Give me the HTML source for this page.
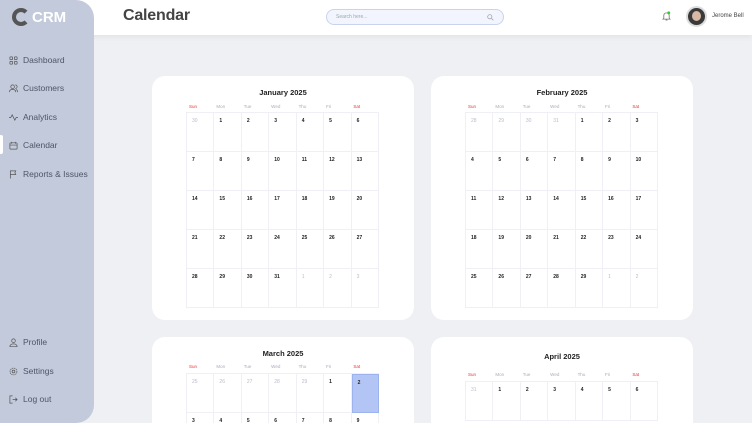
<!DOCTYPE html>
<html><head><meta charset="utf-8"><style>
*{margin:0;padding:0;box-sizing:border-box}
html{width:752px;height:423px;overflow:hidden}
body{width:752px;height:423px;overflow:hidden;background:#eef0f4;font-family:"Liberation Sans",sans-serif;position:relative}
.side{position:absolute;left:0;top:0;width:94px;height:423px;background:#c3cadb;border-radius:0 18px 18px 0;z-index:3}
.logo{position:absolute;left:12px;top:8px;font-weight:bold;font-size:15px;color:#fff;display:flex;align-items:center}
.logo .c{width:18px;height:18px;border:4px solid #555;border-right-color:transparent;border-radius:50%;margin-right:2px}
.nav{position:absolute;left:9px;font-size:8.5px;color:#4d5566;display:flex;align-items:center}
.nav svg{width:9px;height:9px;margin-right:5px}
.act{position:absolute;left:0;top:135px;width:3px;height:19px;background:#fff;border-radius:0 2px 2px 0}
.head{position:absolute;left:0;top:0;width:752px;height:35px;background:#fff;box-shadow:0 2px 6px rgba(0,0,0,.06);z-index:2}
.title{position:absolute;left:123px;top:7px;font-size:16px;color:#444;font-weight:bold;letter-spacing:-0.2px}
.search{position:absolute;left:326px;top:9px;width:178px;height:16px;border:1px solid #c9d3ee;background:#f2f5fd;border-radius:8px;font-size:5px;color:#9aa;padding:4px 9px}
.card{position:absolute;background:#fff;border-radius:13px;width:262px;overflow:hidden}
.mt{position:absolute;width:100%;text-align:center;font-size:7.5px;font-weight:bold;color:#222}
.dh{position:absolute;left:34px;width:192px;display:flex;font-size:4.5px;color:#aab}
.dh span{width:27.4px;padding-left:3px}
.dh .r{color:#e33}
.g{position:absolute;left:34px;width:193px;display:grid;grid-template-columns:repeat(7,1fr);border-top:1px solid #eef0f6;border-left:1px solid #eef0f6}
.g div{height:39px;border-right:1px solid #eef0f6;border-bottom:1px solid #eef0f6;font-size:5px;font-weight:bold;color:#222;padding:5px 0 0 5px}
.g .x{color:#bbc;font-weight:normal}
.g .hl{background:#b3c5f5;border:1px solid #9db3ee}
</style></head><body>
<div class="head">
<div class="title">Calendar</div>
<div class="search">Search here...<svg style="position:absolute;right:9px;top:4px" width="7" height="7" viewBox="0 0 10 10"><circle cx="4" cy="4" r="3" fill="none" stroke="#999" stroke-width="1"/><path d="M6.5 6.5L9 9" stroke="#999"/></svg></div>
<svg style="position:absolute;left:662px;top:11px" width="9" height="10" viewBox="0 0 10 11"><path d="M2 8V5a3 3 0 0 1 6 0v3l1 1H1z" fill="none" stroke="#777" stroke-width=".9"/><path d="M4 10h2" stroke="#777"/><circle cx="7.5" cy="2" r="1.6" fill="#3c3"/></svg>
<div style="position:absolute;left:686px;top:6px;width:21px;height:21px;border-radius:50%;background:#3a3a3a;border:2px solid #ddd;overflow:hidden"><div style="width:9px;height:10px;background:#d9b8a5;border-radius:50%;margin:3px auto 0"></div></div>
<div style="position:absolute;left:712px;top:13px;font-size:6px;color:#444">Jerome Bell</div>
</div>
<div class="side">
<div class="logo"><div class="c"></div>CRM</div>
<div class="act"></div>
<div class="nav" style="top:55px"><svg viewBox="0 0 10 10" fill="none" stroke="#555" stroke-width=".8"><rect x="1" y="1" width="3" height="3" rx=".7"/><rect x="6" y="1" width="3" height="3" rx=".7"/><rect x="1" y="6" width="3" height="3" rx=".7"/><rect x="6" y="6" width="3" height="3" rx=".7"/></svg>Dashboard</div>
<div class="nav" style="top:83px"><svg viewBox="0 0 10 10" fill="none" stroke="#555" stroke-width=".8"><circle cx="4" cy="3" r="2"/><path d="M0.5 9c0-2 1.5-3 3.5-3s3.5 1 3.5 3M7 1a2 2 0 0 1 0 4M8 6c1 .5 1.5 1.5 1.5 3"/></svg>Customers</div>
<div class="nav" style="top:112px"><svg viewBox="0 0 10 10" fill="none" stroke="#555" stroke-width=".8"><path d="M0 5h2l1.5-3 3 6 1.5-3h2"/></svg>Analytics</div>
<div class="nav" style="top:140px"><svg viewBox="0 0 10 10" fill="none" stroke="#555" stroke-width=".8"><rect x="1" y="2" width="8" height="7" rx="1"/><path d="M1 4.5h8M3 1v2M7 1v2"/></svg>Calendar</div>
<div class="nav" style="top:169px"><svg viewBox="0 0 10 10" fill="none" stroke="#555" stroke-width=".8"><path d="M1.5 9.5V1h6l-1 2 1 2h-6"/></svg>Reports &amp; Issues</div>
<div class="nav" style="top:337px"><svg viewBox="0 0 10 10" fill="none" stroke="#555" stroke-width=".8"><circle cx="5" cy="3" r="2"/><path d="M1 9.5c0-2 2-3 4-3s4 1 4 3z"/></svg>Profile</div>
<div class="nav" style="top:366px"><svg viewBox="0 0 10 10" fill="none" stroke="#555" stroke-width=".8"><circle cx="5" cy="5" r="1.5"/><circle cx="5" cy="5" r="3.8" stroke-dasharray="1.5 .8"/></svg>Settings</div>
<div class="nav" style="top:394px"><svg viewBox="0 0 10 10" fill="none" stroke="#555" stroke-width=".8"><path d="M4 1H1v8h3M4 5h5M7 3l2 2-2 2"/></svg>Log out</div>
</div>

<div class="card" style="left:152px;top:76px;height:244px">
<div class="mt" style="top:12px">January 2025</div>
<div class="dh" style="top:28px"><span class="r">Sun</span><span>Mon</span><span>Tue</span><span>Wed</span><span>Thu</span><span>Fri</span><span class="r">Sat</span></div>
<div class="g" style="top:36px"><div class="x">30</div><div>1</div><div>2</div><div>3</div><div>4</div><div>5</div><div>6</div><div>7</div><div>8</div><div>9</div><div>10</div><div>11</div><div>12</div><div>13</div><div>14</div><div>15</div><div>16</div><div>17</div><div>18</div><div>19</div><div>20</div><div>21</div><div>22</div><div>23</div><div>24</div><div>25</div><div>26</div><div>27</div><div>28</div><div>29</div><div>30</div><div>31</div><div class="x">1</div><div class="x">2</div><div class="x">3</div></div>
</div>
<div class="card" style="left:431px;top:76px;height:244px">
<div class="mt" style="top:12px">February 2025</div>
<div class="dh" style="top:28px"><span class="r">Sun</span><span>Mon</span><span>Tue</span><span>Wed</span><span>Thu</span><span>Fri</span><span class="r">Sat</span></div>
<div class="g" style="top:36px"><div class="x">28</div><div class="x">29</div><div class="x">30</div><div class="x">31</div><div>1</div><div>2</div><div>3</div><div>4</div><div>5</div><div>6</div><div>7</div><div>8</div><div>9</div><div>10</div><div>11</div><div>12</div><div>13</div><div>14</div><div>15</div><div>16</div><div>17</div><div>18</div><div>19</div><div>20</div><div>21</div><div>22</div><div>23</div><div>24</div><div>25</div><div>26</div><div>27</div><div>28</div><div>29</div><div class="x">1</div><div class="x">2</div></div>
</div>
<div class="card" style="left:152px;top:337px;height:86px;border-radius:13px 13px 0 0">
<div class="mt" style="top:12px">March 2025</div>
<div class="dh" style="top:27px"><span class="r">Sun</span><span>Mon</span><span>Tue</span><span>Wed</span><span>Thu</span><span>Fri</span><span class="r">Sat</span></div>
<div class="g" style="top:36px"><div class="x">25</div><div class="x">26</div><div class="x">27</div><div class="x">28</div><div class="x">29</div><div>1</div><div class="hl">2</div><div>3</div><div>4</div><div>5</div><div>6</div><div>7</div><div>8</div><div>9</div></div>
</div>
<div class="card" style="left:431px;top:337px;height:86px;border-radius:13px 13px 0 0">
<div class="mt" style="top:15px">April 2025</div>
<div class="dh" style="top:35px"><span class="r">Sun</span><span>Mon</span><span>Tue</span><span>Wed</span><span>Thu</span><span>Fri</span><span class="r">Sat</span></div>
<div class="g" style="top:44px"><div class="x">31</div><div>1</div><div>2</div><div>3</div><div>4</div><div>5</div><div>6</div></div>
</div>
</body></html>
